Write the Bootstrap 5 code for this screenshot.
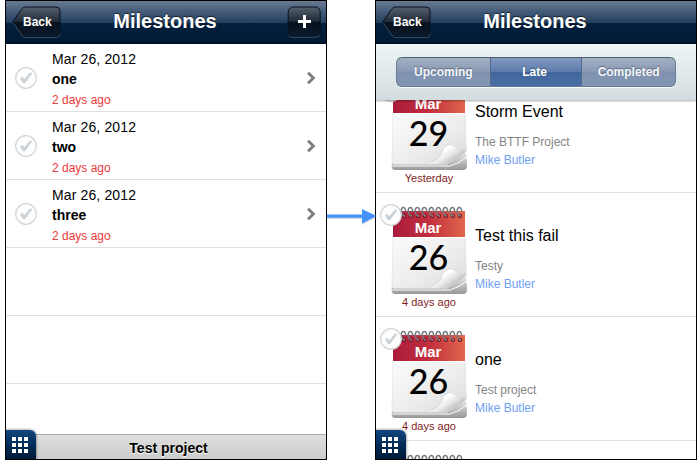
<!DOCTYPE html>
<html lang="en">
<head>
<meta charset="utf-8">
<meta name="viewport" content="width=device-width, initial-scale=1">
<title>Milestones</title>
<link href="https://cdn.jsdelivr.net/npm/bootstrap@5.3.0/dist/css/bootstrap.min.css" rel="stylesheet">
<style>
body{font-family:"Liberation Sans",Arial,sans-serif;color:#000;line-height:1.2;width:700px;height:460px;padding-left:5px}
.phone{width:322px;height:460px;border:1px solid #000;background:#fff}
.topbar{height:43px;flex:none;background:linear-gradient(#6a7b92 0,#435b79 25%,#25405f 50%,#04213f 51%,#001a35 95%,#000c1c 100%);padding:0 5px 1px 6px;z-index:3}
.title{font-size:20px;font-weight:700;color:#fff;text-shadow:0 -1px 1px rgba(0,0,0,.6);padding-bottom:2px;margin-left:-3px}
.side{width:50px;height:32px}
.back-label{font:700 12px "Liberation Sans",Arial,sans-serif;fill:#fff}
.task{height:68px;border-bottom:1px solid #e0e0e0;padding:0 10px 0 8px;flex:none}
.task-text{margin-left:14px;padding-top:6px}
.date{font-size:14px;line-height:18px;letter-spacing:.13px}
.name{font-size:14px;font-weight:700;line-height:20px;margin-top:1px}
.ago{font-size:12px;line-height:20px;margin-top:1px;color:#e8393c}
.footbar{height:25px;border-top:1px solid #a9a9a9;background:linear-gradient(#e0e0e0,#cbcbcb);font-size:14px;font-weight:700;text-shadow:0 1px 0 #fff;padding:2px 0 0 5px}
.grid-tab{width:30px;height:29px;left:0;bottom:0;border-radius:0 6px 0 0;background:linear-gradient(#12477f,#002a55 55%,#001a38);box-shadow:0 0 3px rgba(0,0,0,.6);z-index:4;padding-right:2px}
.link-arrow{width:50px;margin:0 -1px;padding-top:205px;z-index:5}
.filters{height:56px;flex:none;background:linear-gradient(#edf5f6,#d3dde0);padding:13px 21px 0 20px;box-shadow:0 1px 2px rgba(0,0,0,.35);z-index:3}
.segments{height:30px;width:280px;border:1px solid #687b94;border-top-color:#4e5e6f;border-radius:6px;overflow:hidden;background:linear-gradient(#a4b1c2,#8b9bb4 45%,#7e91af 52%,#8496b2);box-shadow:0 1px 0 #f5fafa}
.segment{font-size:12px;font-weight:700;color:#f5f7fa;text-shadow:0 -1px 1px rgba(50,65,90,.6);padding-top:1px}
.segment-on{background:linear-gradient(#8299be,#5d7cad 48%,#41669c 52%,#4b70a4);border-left:1px solid #52698b;border-right:1px solid #52698b;color:#fff;padding-right:3px}
.events{margin-top:-31px}
.event{height:124px;border-bottom:1px solid #e0e0e0;flex:none;padding-left:4px}
.event-text{padding-top:33px;margin-left:3px}
.event-name{font-size:16px;line-height:20px}
.project{font-size:12px;line-height:18px;color:#858585;margin-top:11px}
.person{font-size:12px;line-height:18px;color:#6e9ff5}
.month{font:700 15px "Liberation Sans",Arial,sans-serif;fill:#fff}
.day{font:500 34px Lato,sans-serif;fill:#000}
.when{font:11px "Liberation Sans",Arial,sans-serif;fill:#7f1d1d}
</style>
<script src="https://cdn.jsdelivr.net/npm/bootstrap@5.3.0/dist/js/bootstrap.bundle.min.js"></script>
</head>
<body class="d-flex overflow-hidden bg-white">
<svg width="0" height="0" class="position-absolute" aria-hidden="true">
<defs>
<linearGradient id="btn" x2="0" y2="1"><stop stop-color="#56606c"/><stop offset=".48" stop-color="#222c38"/><stop offset=".52" stop-color="#08111d"/><stop offset="1" stop-color="#0b1a2b"/></linearGradient>
<linearGradient id="red"><stop stop-color="#a91c3a"/><stop offset=".5" stop-color="#c22f3f"/><stop offset="1" stop-color="#e0674c"/></linearGradient>
<linearGradient id="paper" x2="1" y2="1"><stop stop-color="#fbfbfb"/><stop offset=".55" stop-color="#ededed"/><stop offset="1" stop-color="#dcdcdc"/></linearGradient>
<linearGradient id="edge" x2="0" y2="1"><stop stop-color="#eee"/><stop offset="1" stop-color="#979797"/></linearGradient>
<linearGradient id="curl" gradientUnits="userSpaceOnUse" x1="62" y1="74" x2="76" y2="95"><stop stop-color="#e2e2e2"/><stop offset=".3" stop-color="#fff"/><stop offset=".6" stop-color="#e4e4e4"/><stop offset="1" stop-color="#a9a9a9"/></linearGradient>
<symbol id="check" viewBox="0 0 24 24"><circle cx="12" cy="12" r="10.3" fill="#fdfdfd" stroke="#d2d6d8" stroke-width="1.2"/><path d="M6 12.800 8.400 10.800l2 2.400 5.800-7 2 1-7.200 10h-1.800z" fill="#c9d2d8"/></symbol>
<symbol id="back" viewBox="0 0 50 32"><path d="M.8 16 9.500 3.200Q11 1 13.500 1H44q4 0 4 4v22q0 4-4 4H13.500Q11 31 9.500 28.800Z" fill="url(#btn)" stroke="#07111f"/><path d="M1.500 17 10 29.600q1.500 2 4 2H44q4 0 4.600-4" fill="none" stroke="#50647d" stroke-width=".7"/></symbol>
<symbol id="ring" viewBox="0 0 7 14"><circle cx="4" cy="10" r="2.1" fill="#6d1727"/><path d="M4.500 10C.5 9 .3 2.200 3.200 1.600 5.200 1.300 5.800 4 5.500 6" fill="none" stroke="#74797d" stroke-width="1.500"/><path d="M2.300 3.500q.2-1 1-1.200" stroke="#ddd" stroke-width=".5" fill="none"/><circle cx="4.300" cy="10" r=".8" fill="#b9979d"/></symbol>
<symbol id="spiral" viewBox="0 0 64 14"><use href="#ring" x="0" width="7" height="14"/><use href="#ring" x="7" width="7" height="14"/><use href="#ring" x="14" width="7" height="14"/><use href="#ring" x="21" width="7" height="14"/><use href="#ring" x="28" width="7" height="14"/><use href="#ring" x="35" width="7" height="14"/><use href="#ring" x="42" width="7" height="14"/><use href="#ring" x="49" width="7" height="14"/><use href="#ring" x="56" width="7" height="14"/></symbol>
<symbol id="calendar" viewBox="0 0 92 123">
<path d="M12.500 90 11.700 97q-.2 3.500 3 4H84q3-.5 3-4L86 82Z" fill="url(#edge)"/>
<path d="M12 97H70Q80 94 86.500 88" fill="none" stroke="#fff" stroke-width="1"/><path d="M12 98.800H72Q81 97 87 93" fill="none" stroke="#aaa" stroke-width=".6"/>
<path d="M13 44H85L86.300 82Q78 90 66 95.500H14.500Q12 95.500 12 93Z" fill="url(#paper)" stroke="#d6d6d6" stroke-width=".5"/>
<path d="M45 95.500Q60 91.500 62 83 64 75.500 70 75.500 74 75.500 79 80 82 82 86.300 81Q78 91 62 95.500Z" fill="url(#curl)" stroke="#c2c2c2" stroke-width=".5"/>
<path d="M13 18H85V44H13Z" fill="url(#red)"/><path d="M13 44.500H85" stroke="#fff"/>
<use href="#spiral" x="20" y="13" width="64" height="14"/>
</symbol>
<symbol id="chevron" viewBox="0 0 10 14"><path d="m2 1.800 5.400 5.200L2 12.200" fill="none" stroke="#7d7d7d" stroke-width="2.800"/></symbol>
<symbol id="apps" viewBox="0 0 18 18"><path d="M1 1h4v4H1zM7 1h4v4H7zM13 1h4v4h-4zM1 7h4v4H1zM7 7h4v4H7zM13 7h4v4h-4zM1 13h4v4H1zM7 13h4v4H7zM13 13h4v4h-4z" fill="#fff"/></symbol>
</defs>
</svg>

<section class="phone d-flex flex-column position-relative overflow-hidden flex-shrink-0">
<header class="topbar d-flex align-items-center justify-content-between">
<svg class="side" viewBox="0 0 50 32"><use href="#back" width="50" height="32"/><text class="back-label" x="11" y="19.500">Back</text></svg>
<div class="title">Milestones</div>
<div class="side d-flex justify-content-end"><svg width="34" height="32" viewBox="0 0 34 32"><rect x="1.200" y="1" width="32" height="29.500" rx="5" fill="url(#btn)" stroke="#07111f"/><path d="M1.500 29q1.500 2.300 4 2.300h23q3 0 4-2.300" fill="none" stroke="#50647d" stroke-width=".7"/><path d="M11 15.500h13M17.500 9v13" stroke="#fff" stroke-width="3"/></svg></div>
</header>
<div class="task d-flex align-items-center"><svg width="24" height="24"><use href="#check"/></svg><div class="task-text align-self-start flex-grow-1"><div class="date">Mar 26, 2012</div><div class="name">one</div><div class="ago">2 days ago</div></div><svg width="10" height="14"><use href="#chevron"/></svg></div>
<div class="task d-flex align-items-center"><svg width="24" height="24"><use href="#check"/></svg><div class="task-text align-self-start flex-grow-1"><div class="date">Mar 26, 2012</div><div class="name">two</div><div class="ago">2 days ago</div></div><svg width="10" height="14"><use href="#chevron"/></svg></div>
<div class="task d-flex align-items-center"><svg width="24" height="24"><use href="#check"/></svg><div class="task-text align-self-start flex-grow-1"><div class="date">Mar 26, 2012</div><div class="name">three</div><div class="ago">2 days ago</div></div><svg width="10" height="14"><use href="#chevron"/></svg></div>
<div class="task"></div>
<div class="task"></div>
<footer class="footbar mt-auto d-flex align-items-center justify-content-center">Test project</footer>
<div class="grid-tab position-absolute d-flex align-items-center justify-content-center"><svg width="18" height="18"><use href="#apps"/></svg></div>
</section>

<div class="link-arrow flex-shrink-0 position-relative"><svg class="d-block" width="50" height="24" viewBox="0 0 50 24"><g fill="#8b9099" opacity=".35"><path d="M1 11h36v3H1zM36 5l14 7.500L36 20z"/></g><path d="M1 9.500h35v3.200H1zM36 4l14.500 7L36 18.500z" fill="#4593fa"/></svg></div>

<section class="phone d-flex flex-column position-relative overflow-hidden flex-shrink-0">
<header class="topbar d-flex align-items-center justify-content-between">
<svg class="side" viewBox="0 0 50 32"><use href="#back" width="50" height="32"/><text class="back-label" x="11" y="19.500">Back</text></svg>
<div class="title">Milestones</div>
<div class="side"></div>
</header>
<nav class="filters">
<div class="segments d-flex">
<div class="segment d-flex align-items-center justify-content-center col-4">Upcoming</div>
<div class="segment segment-on d-flex align-items-center justify-content-center col-4">Late</div>
<div class="segment d-flex align-items-center justify-content-center col-4">Completed</div>
</div>
</nav>
<div class="events d-flex flex-column">
<div class="event d-flex"><svg width="92" height="123" viewBox="0 0 92 123"><use href="#calendar" width="92" height="123"/><use href="#check" x="-1" y="10" width="24" height="24"/><text class="month" x="48" y="39.500" text-anchor="middle">Mar</text><text class="day" x="48.500" y="77" text-anchor="middle">29</text><text class="when" x="49" y="112.500" text-anchor="middle">Yesterday</text></svg><div class="event-text"><div class="event-name">Storm Event</div><div class="project">The BTTF Project</div><div class="person">Mike Butler</div></div></div>
<div class="event d-flex"><svg width="92" height="123" viewBox="0 0 92 123"><use href="#calendar" width="92" height="123"/><use href="#check" x="-1" y="10" width="24" height="24"/><text class="month" x="48" y="39.500" text-anchor="middle">Mar</text><text class="day" x="48.500" y="77" text-anchor="middle">26</text><text class="when" x="49" y="112.500" text-anchor="middle">4 days ago</text></svg><div class="event-text"><div class="event-name">Test this fail</div><div class="project">Testy</div><div class="person">Mike Butler</div></div></div>
<div class="event d-flex"><svg width="92" height="123" viewBox="0 0 92 123"><use href="#calendar" width="92" height="123"/><use href="#check" x="-1" y="10" width="24" height="24"/><text class="month" x="48" y="39.500" text-anchor="middle">Mar</text><text class="day" x="48.500" y="77" text-anchor="middle">26</text><text class="when" x="49" y="112.500" text-anchor="middle">4 days ago</text></svg><div class="event-text"><div class="event-name">one</div><div class="project">Test project</div><div class="person">Mike Butler</div></div></div>
<div class="event d-flex"><svg width="92" height="123" viewBox="0 0 92 123"><use href="#calendar" width="92" height="123"/></svg></div>
</div>
<div class="grid-tab position-absolute d-flex align-items-center justify-content-center"><svg width="18" height="18"><use href="#apps"/></svg></div>
</section>
</body>
</html>
